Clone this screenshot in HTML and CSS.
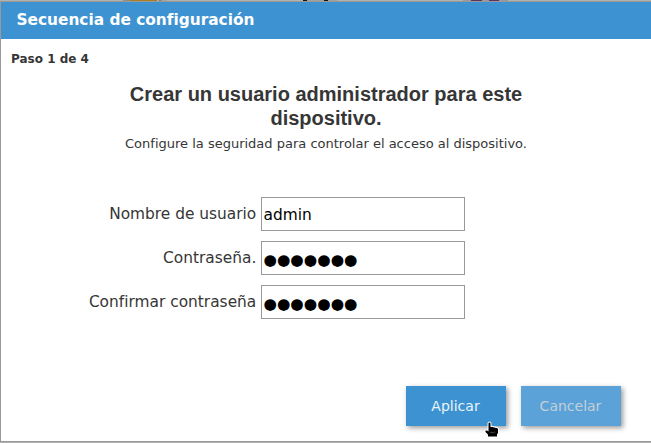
FILE: index.html
```
<!DOCTYPE html>
<html lang="es">
<head>
<meta charset="utf-8">
<title>Secuencia de configuración</title>
<link rel="stylesheet" href="styles.css">
</head>
<body>
<div class="backdrop"></div>
<main class="dialog">
  <header class="titlebar">Secuencia de configuración</header>
  <div class="step">Paso 1 de 4</div>
  <h1>Crear un usuario administrador para este<br>dispositivo.</h1>
  <p class="intro">Configure la seguridad para controlar el acceso al dispositivo.</p>
  <form class="fields">
    <div class="row"><div class="label">Nombre de usuario</div><div class="field">admin</div></div>
    <div class="row"><div class="label">Contraseña.</div><div class="field"><span class="dots">●●●●●●●</span></div></div>
    <div class="row"><div class="label">Confirmar contraseña</div><div class="field"><span class="dots">●●●●●●●</span></div></div>
  </form>
  <footer class="actions">
    <button type="button" class="button">Aplicar</button>
    <button type="button" class="button cancel">Cancelar</button>
  </footer>
</main>
<svg class="cursor" viewBox="0 0 16 17" width="16" height="17">
  <path d="M4.500 2.500Q4.500 1.500 5.500 1.500Q6.500 1.500 6.500 2.500V6H9L9.500 6.500H11L11.500 7H13L14 8V12L13 13.500V15.500H4V13.500L1.500 11V9.500H3L4.500 10.500Z" fill="#000" stroke="#fff" stroke-width="2" stroke-linejoin="round" paint-order="stroke"/>
  <path d="M5.500 11l1.200 1 1.200-1 1.200 1 1.200-1 1.200 1" fill="none" stroke="#777" stroke-width=".6"/>
</svg>
</body>
</html>
```
FILE: styles.css
```
* { box-sizing: border-box; }
html, body { height: 100%; }
body {
  margin: 0;
  display: flex;
  flex-direction: column;
  overflow: hidden;
  background: #b1b1b1;
  color: #363636;
  font-family: "DejaVu Sans", sans-serif;
}
.backdrop {
  height: 1px;
  flex: none;
  background: linear-gradient(90deg, #b1b1b1 123px, #8d8d8d 123px 130px, #a77f20 130px 157px, #b1b1b1 157px 159px, #777 159px 161px, #a0a0a0 161px 167px, #b1b1b1 167px 303px, #111 303px 307px, #a0a0a0 307px 324px, #111 324px 328px, #a0a0a0 328px 337px, #b1b1b1 337px 463px, #999 463px 471px, #603060 471px 482px, #999 482px 489px, #603060 489px 499px, #999 499px 508px, #b1b1b1 508px);
}
.dialog {
  height: 441px;
  flex: none;
  display: flex;
  flex-direction: column;
  background: #fff;
  border: solid #999;
  border-width: 1px 0 1px 1px;
}
.titlebar {
  height: 37px;
  flex: none;
  padding-left: 15.5px;
  background: #3d93d1;
  color: #fff;
  font-size: 15.36px;
  font-weight: bold;
  line-height: 36px;
}
.step {
  padding: 10px 0 0 10px;
  font-size: 12px;
  font-weight: bold;
  line-height: 20px;
}
h1 {
  margin: 13px 0 0;
  font: bold 20px/24px "Liberation Sans", Arial, sans-serif;
  text-align: center;
}
.intro {
  margin: 4px 0 0;
  font-size: 13px;
  line-height: 20px;
  text-align: center;
}
.fields {
  display: flex;
  flex-direction: column;
  gap: 10px;
  margin-top: 43px;
}
.row { display: flex; height: 34px; }
.label {
  width: 255.3px;
  margin-right: 4.7px;
  text-align: right;
  font-size: 15.4px;
  line-height: 34px;
  white-space: nowrap;
}
.field {
  width: 204px;
  padding-left: 1.5px;
  border: 1px solid #999;
  color: #000;
  font-size: 15.4px;
  line-height: 34px;
  white-space: nowrap;
  overflow: hidden;
}
.dots { display: block; font-size: 15.4px; line-height: 36px; }
.actions {
  display: flex;
  justify-content: flex-end;
  gap: 15px;
  margin: auto 30px 15px 0;
}
.button {
  width: 100px;
  height: 40px;
  padding: 0 1px 0 0;
  border: 0;
  background: #3d93d1;
  color: #e9f3fa;
  box-shadow: 2px 2px 5px rgba(0, 0, 0, .4);
  font: 14px "DejaVu Sans", sans-serif;
}
.cancel { background: #5aa2d7; color: #c3cfd8; }
.cursor { position: absolute; left: 484px; top: 421px; }
```
